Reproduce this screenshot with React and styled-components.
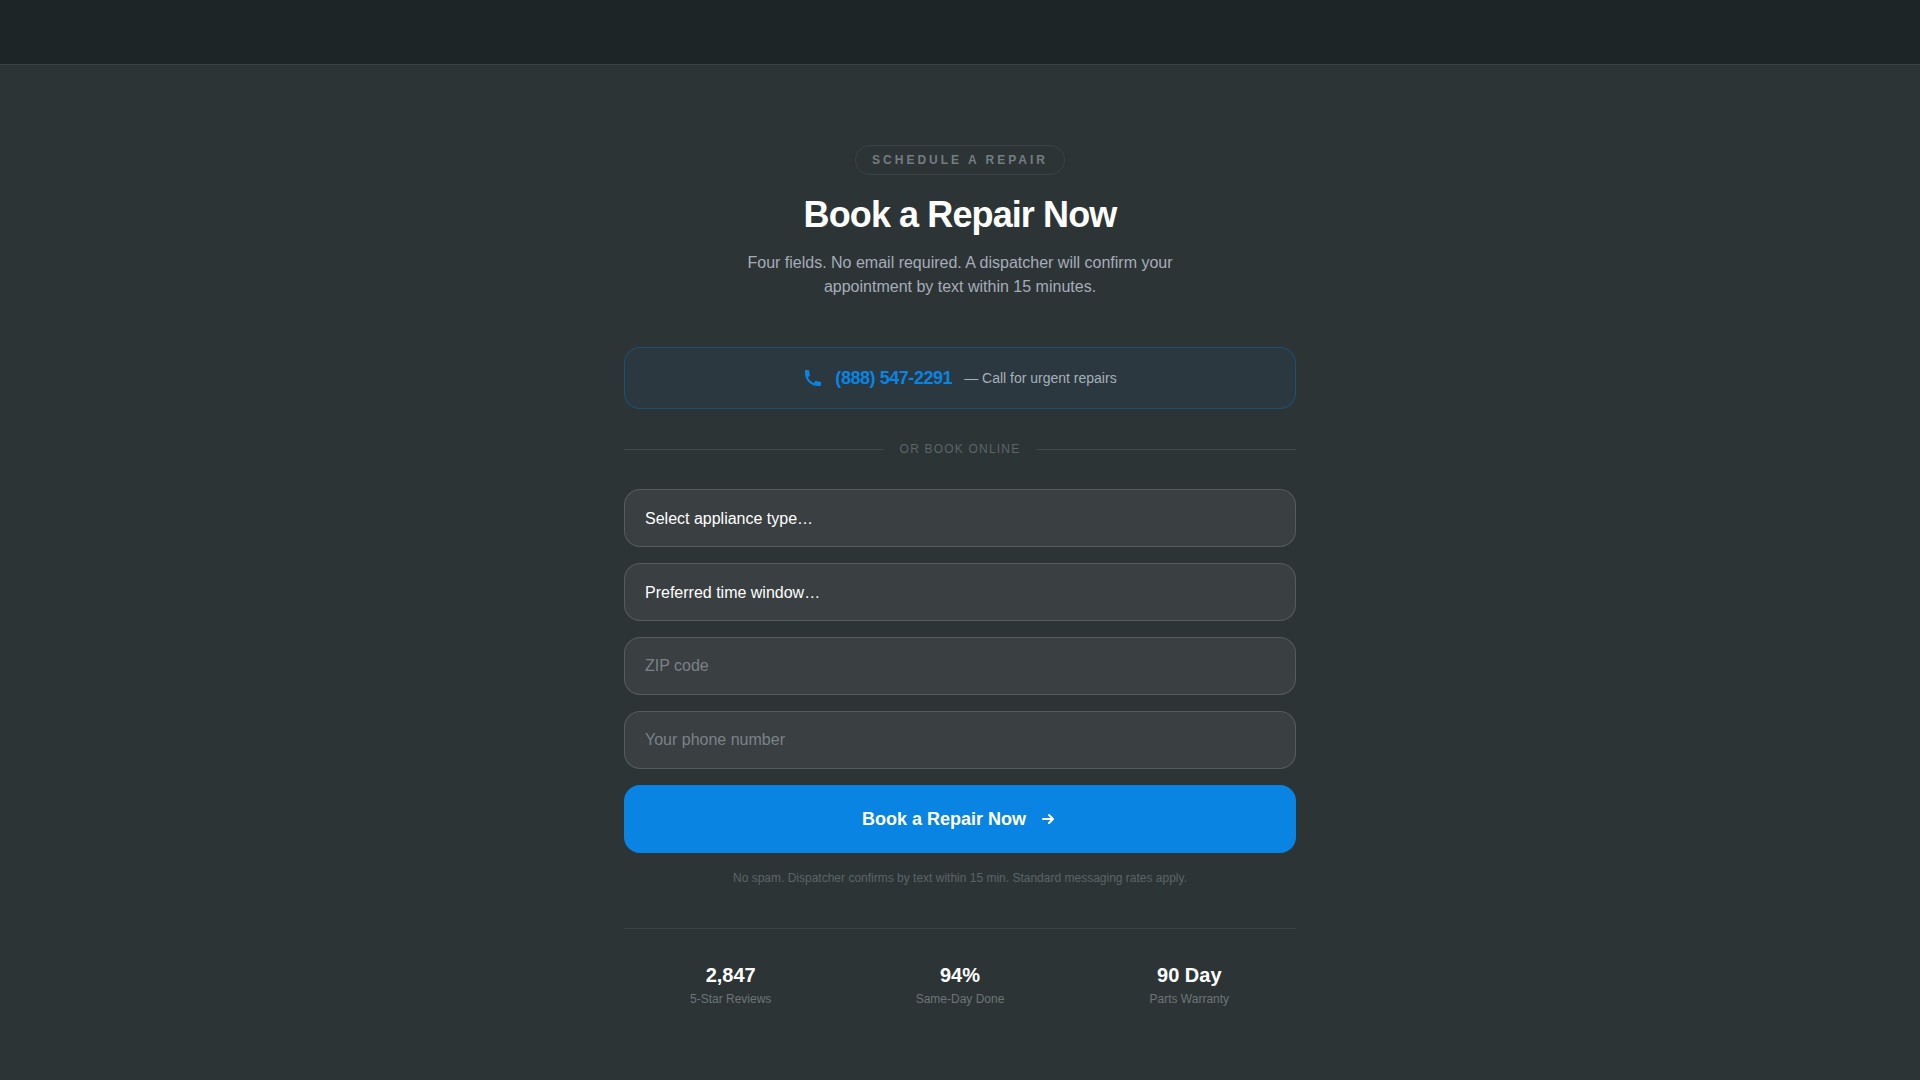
import React from 'react';
import styled, {createGlobalStyle} from 'styled-components';

const GlobalStyle = createGlobalStyle`
  * {
    box-sizing: border-box;
  }

  body {
    margin: 0;
    background-color: #2d3436;
    color: #ffffff;
    font-family: "Liberation Sans", Arial, sans-serif;
  }
`;
const TopBar = styled.header`
  height: 64px;
  background-color: #1e2527;
`;
const Section = styled.section`
  border-top: 1px solid #3a4345;
  padding: 80px 24px 64px;
`;
const Container = styled.div`
  max-width: 672px;
  margin: 0 auto;
`;
const Intro = styled.div`
  display: flex;
  flex-direction: column;
  align-items: center;
  text-align: center;
  margin-bottom: 48px;
`;
const Badge = styled.span`
  border: 1px solid #3a4345;
  border-radius: 15px;
  padding: 6px 16px;
  margin-bottom: 20px;
  color: #747d80;
  font-size: 12px;
  line-height: 16px;
  font-weight: 700;
  letter-spacing: 3px;
  text-transform: uppercase;
`;
const Title = styled.h2`
  margin: 0 0 16px;
  font-size: 36px;
  line-height: 40px;
  font-weight: 700;
  letter-spacing: -0.025em;
`;
const Lead = styled.p`
  margin: 0;
  max-width: 448px;
  color: #a5adb9;
  font-size: 16px;
  line-height: 24px;
`;
const CallLink = styled.a`
  display: flex;
  align-items: center;
  justify-content: center;
  gap: 12px;
  padding: 16px 24px;
  border: 1px solid rgba(9,132,227,.3);
  border-radius: 16px;
  background-color: rgba(9,132,227,.06);
  color: #0984e3;
  text-decoration: none;

  & strong {
    font-size: 18px;
    line-height: 28px;
    letter-spacing: -0.025em;
  }

  & span {
    color: #a5b0b9;
    font-size: 14px;
    line-height: 20px;
  }
`;
const Divider = styled.div`
  display: flex;
  align-items: center;
  gap: 16px;
  margin: 32px 0;
  color: #5c6568;
  font-size: 12px;
  line-height: 16px;
  letter-spacing: 0.1em;
  text-transform: uppercase;

  &::before,
  &::after {
    content: "";
    flex: 1;
    height: 1px;
    background-color: #3f484a;
  }
`;
const Form = styled.form`
  display: flex;
  flex-direction: column;
  gap: 16px;
`;
const Field = styled.input`
  appearance: none;
  width: 100%;
  height: 58px;
  padding: 0 20px;
  border: 1px solid rgba(255,255,255,.15);
  border-radius: 16px;
  background-color: #3a3f41;
  color: #ffffff;
  font-family: inherit;
  font-size: 16px;
  outline: none;

  &::placeholder {
    color: #7a8288;
  }

  &:focus {
    border-color: #0984e3;
  }

  & option {
    background-color: #2d3436;
  }
`;
const Submit = styled.button`
  display: flex;
  align-items: center;
  justify-content: center;
  gap: 12px;
  padding: 20px 24px;
  border: none;
  border-radius: 16px;
  background-color: #0984e3;
  color: #ffffff;
  font-family: inherit;
  font-size: 18px;
  line-height: 28px;
  font-weight: 700;
  cursor: pointer;

  &:hover {
    opacity: .9;
  }
`;
const Note = styled.p`
  margin: 0;
  color: #5c6467;
  font-size: 12px;
  line-height: 18px;
  text-align: center;
`;
const Stats = styled.dl`
  display: grid;
  grid-template-columns: repeat(3, 1fr);
  gap: 16px;
  margin: 41px 0 0;
  padding-top: 32px;
  border-top: 1px solid #3a4345;
  text-align: center;
`;
const Stat = styled.div`
  display: flex;
  flex-direction: column-reverse;
  gap: 2px;

  & dd {
    margin: 0;
    font-size: 20px;
    line-height: 28px;
    font-weight: 700;
  }

  & dt {
    color: #6c7477;
    font-size: 12px;
    line-height: 16px;
  }
`;

const appliances = ['Refrigerator', 'Washer', 'Dryer', 'Dishwasher', 'Oven'];
const windows = ['Morning', 'Afternoon', 'Evening'];
const stats = [
  {value: '2,847', label: '5-Star Reviews'},
  {value: '94%', label: 'Same-Day Done'},
  {value: '90 Day', label: 'Parts Warranty'},
];

const PhoneIcon = () => (
  <svg width="20" height="20" viewBox="0 0 20 20" fill="currentColor" aria-hidden="true">
    <path d="M2 3a1 1 0 0 1 1-1h2.153a1 1 0 0 1 .986.836l.74 4.435a1 1 0 0 1-.54 1.06l-1.548.773a11.037 11.037 0 0 0 6.105 6.105l.774-1.548a1 1 0 0 1 1.059-.54l4.435.74a1 1 0 0 1 .836.986V17a1 1 0 0 1-1 1h-2C7.82 18 2 12.18 2 5V3z"/>
  </svg>
);

const ArrowIcon = () => (
  <svg width="20" height="20" viewBox="0 0 20 20" fill="currentColor" aria-hidden="true">
    <path fillRule="evenodd" clipRule="evenodd" d="M10.293 5.293a1 1 0 0 1 1.414 0l4 4a1 1 0 0 1 0 1.414l-4 4a1 1 0 0 1-1.414-1.414L12.586 11H5a1 1 0 1 1 0-2h7.586l-2.293-2.293a1 1 0 0 1 0-1.414z"/>
  </svg>
);

const BookingForm = () => {
  const onSubmit = (evt) => {
    evt.preventDefault();
  };

  return (
    <Form onSubmit={onSubmit}>
      <Field as="select" name="appliance" aria-label="Appliance type" defaultValue="">
        <option value="">Select appliance type…</option>
        {appliances.map((item) => <option key={item}>{item}</option>)}
      </Field>
      <Field as="select" name="window" aria-label="Preferred time window" defaultValue="">
        <option value="">Preferred time window…</option>
        {windows.map((item) => <option key={item}>{item}</option>)}
      </Field>
      <Field type="text" name="zip" aria-label="ZIP code" placeholder="ZIP code"/>
      <Field type="tel" name="phone" aria-label="Your phone number" placeholder="Your phone number"/>
      <Submit type="submit">
        Book a Repair Now
        <ArrowIcon/>
      </Submit>
      <Note>No spam. Dispatcher confirms by text within 15 min. Standard messaging rates apply.</Note>
    </Form>
  );
};

const App = () => (
  <>
    <GlobalStyle/>
    <TopBar/>
    <Section>
      <Container>
        <Intro>
          <Badge>Schedule a Repair</Badge>
          <Title>Book a Repair Now</Title>
          <Lead>Four fields. No email required. A dispatcher will confirm your appointment by text within 15 minutes.</Lead>
        </Intro>
        <CallLink href="tel:+18885472291">
          <PhoneIcon/>
          <strong>(888) 547-2291</strong>
          <span>— Call for urgent repairs</span>
        </CallLink>
        <Divider>or book online</Divider>
        <BookingForm/>
        <Stats>
          {stats.map(({value, label}) => (
            <Stat key={label}>
              <dt>{label}</dt>
              <dd>{value}</dd>
            </Stat>
          ))}
        </Stats>
      </Container>
    </Section>
  </>
);

export default App;
